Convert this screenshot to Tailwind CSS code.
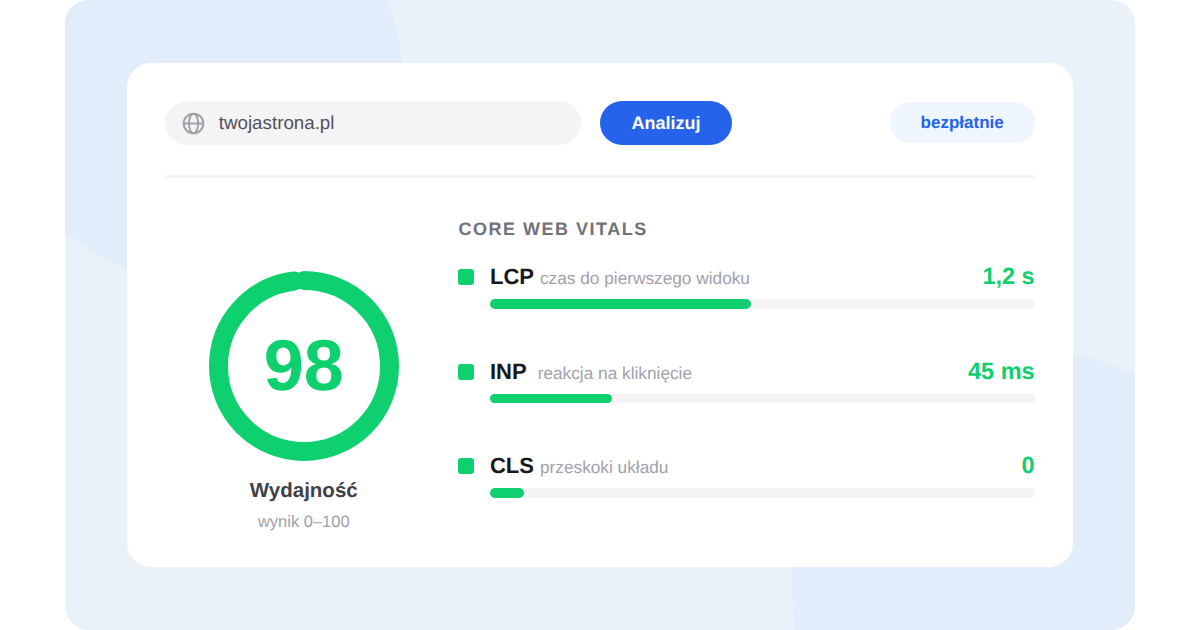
<!DOCTYPE html>
<html lang="pl">

<head>
  <meta charset="UTF-8">
  <meta name="viewport" content="width=device-width, initial-scale=1.0">
  <title>Core Web Vitals</title>
  <script src="https://cdn.jsdelivr.net/npm/@tailwindcss/browser@4"></script>
</head>

<body class="bg-white font-['Liberation_Sans',Arial,sans-serif] [text-rendering:geometricPrecision]">
  <div class="w-[1200px] h-[630px] overflow-hidden pl-[64.7px]">
    <div class="relative w-[1070.6px] h-[630px] overflow-hidden rounded-[24px] bg-[#e9f1f9] pt-[63px] pl-[62.6px]">
      <!-- background circles -->
      <div class="absolute left-[-68px] top-[-123px] w-[406px] h-[406px] rounded-full bg-[#e1edfb]"></div>
      <div class="absolute left-[727px] top-[351px] w-[478px] h-[478px] rounded-full bg-[#e1edfb]"></div>

      <div class="relative w-[945.4px] h-[504px] rounded-[24px] bg-white px-[38px] pt-[38px]">
        <!-- url bar -->
        <div class="flex items-center h-[44px]">
          <div class="flex items-center w-[416px] h-[44px] rounded-full bg-[#f4f4f5] pl-[16.5px]">
            <svg class="w-[23px] h-[23px] text-[#a1a1aa]" viewBox="0 0 23 23" fill="none" stroke="currentColor" stroke-width="2">
              <circle cx="11.5" cy="11.5" r="9.8" />
              <ellipse cx="11.5" cy="11.5" rx="4.6" ry="9.8" />
              <path d="M1.7 11.5h19.6" />
            </svg>
            <span class="ml-[14px] text-[18.75px] text-[#52525b]">twojastrona.pl</span>
          </div>
          <div class="flex items-center justify-center ml-[18.7px] w-[132px] h-[44px] rounded-full bg-[#2563eb] text-[18px] font-bold text-white">Analizuj</div>
          <div class="flex items-center justify-center ml-auto mb-[1px] w-[145px] h-[41px] rounded-full bg-[#eff6ff] text-[17px] font-bold text-[#2563eb]">bezpłatnie</div>
        </div>

        <div class="mt-[30px] h-[3px] bg-[#f4f4f5]"></div>

        <div class="flex">
          <!-- score -->
          <div class="flex flex-col items-center w-[277px] pt-[93px]">
            <div class="relative w-[190px] h-[190px] flex items-center justify-center">
              <svg class="absolute inset-0 w-[190px] h-[190px] -rotate-90" viewBox="0 0 190 190" fill="none">
                <circle cx="95" cy="95" r="85.5" stroke="#0fd06f" stroke-width="19" stroke-linecap="round" stroke-dasharray="526.5 537.2" />
              </svg>
              <span class="relative text-[72px] leading-none font-bold text-[#0fd06f]">98</span>
            </div>
            <div class="mt-[18px] text-[20.5px] leading-[24px] font-bold text-[#3f3f46]">Wydajność</div>
            <div class="mt-[9px] text-[16.5px] leading-[20px] text-[#a1a1aa]">wynik 0–100</div>
          </div>

          <!-- vitals -->
          <div class="flex-1 ml-[15.7px] pt-[41px]">
            <h2 class="pl-[0.5px] text-[18px] leading-[20px] font-bold tracking-[1.5px] text-[#71717a]">CORE WEB VITALS</h2>

            <div class="mt-[26px] flex flex-col gap-[51px]">
              <div class="flex">
                <div class="mt-[4px] w-[16px] h-[16px] rounded-[3px] bg-[#0fd06f]"></div>
                <div class="flex-1 ml-[16px]">
                  <div class="flex items-baseline h-[34px] leading-[22px]">
                    <span class="text-[22px] font-bold text-[#18181b]">LCP</span>
                    <span class="ml-[6px] text-[17.25px] text-[#a1a1aa]">czas do pierwszego widoku</span>
                    <span class="ml-auto text-[23.5px] font-bold text-[#0fd06f]">1,2 s</span>
                  </div>
                  <div class="h-[9.5px] rounded-full bg-[#f4f4f5]">
                    <div class="h-full w-[261px] rounded-full bg-[#0fd06f]"></div>
                  </div>
                </div>
              </div>

              <div class="flex">
                <div class="mt-[4px] w-[16px] h-[16px] rounded-[3px] bg-[#0fd06f]"></div>
                <div class="flex-1 ml-[16px]">
                  <div class="flex items-baseline h-[34px] leading-[22px]">
                    <span class="text-[22px] font-bold text-[#18181b]">INP</span>
                    <span class="ml-[11px] text-[17.25px] text-[#a1a1aa]">reakcja na kliknięcie</span>
                    <span class="ml-auto text-[23.5px] font-bold text-[#0fd06f]">45 ms</span>
                  </div>
                  <div class="h-[9.5px] rounded-full bg-[#f4f4f5]">
                    <div class="h-full w-[122px] rounded-full bg-[#0fd06f]"></div>
                  </div>
                </div>
              </div>

              <div class="flex">
                <div class="mt-[4px] w-[16px] h-[16px] rounded-[3px] bg-[#0fd06f]"></div>
                <div class="flex-1 ml-[16px]">
                  <div class="flex items-baseline h-[34px] leading-[22px]">
                    <span class="text-[22px] font-bold text-[#18181b]">CLS</span>
                    <span class="ml-[6px] text-[17.25px] text-[#a1a1aa]">przeskoki układu</span>
                    <span class="ml-auto text-[23.5px] font-bold text-[#0fd06f]">0</span>
                  </div>
                  <div class="h-[9.5px] rounded-full bg-[#f4f4f5]">
                    <div class="h-full w-[34px] rounded-full bg-[#0fd06f]"></div>
                  </div>
                </div>
              </div>
            </div>
          </div>
        </div>
      </div>
    </div>
  </div>
</body>

</html>
